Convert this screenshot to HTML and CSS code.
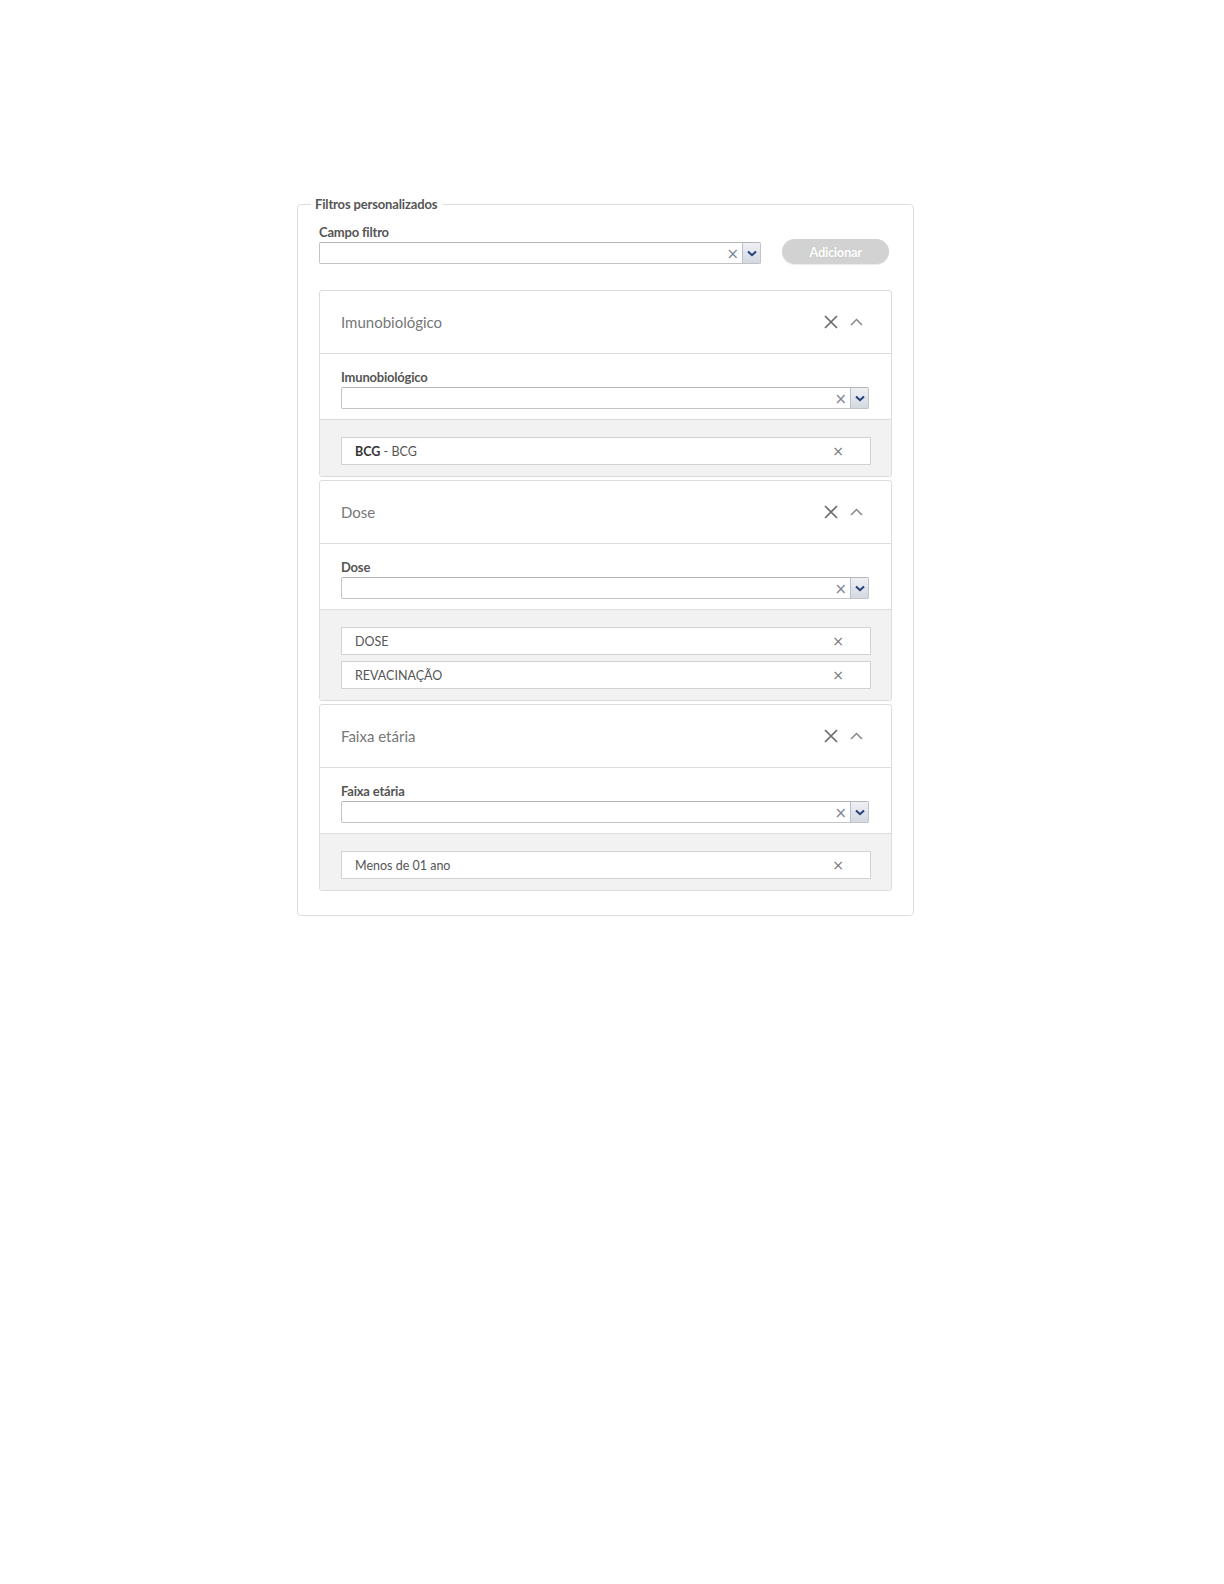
FILE: index.html
```html
<!DOCTYPE html>
<html lang="pt-BR">
<head>
    <meta charset="UTF-8" />
    <title>Filtros personalizados</title>
    <link rel="stylesheet" href="styles.css">
</head>
<body>
    <div class="page">
        <fieldset class="filters">
            <legend>Filtros personalizados</legend>

            <div class="add-row">
                <div class="field">
                    <label class="field-label">Campo filtro</label>
                    <div class="combo">
                        <span class="combo-input"></span>
                        <span class="combo-clear">&times;</span>
                        <span class="combo-btn">
                            <svg width="10" height="7" viewBox="0 0 10 7"><path d="M1 1.5 L5 5.2 L9 1.5" fill="none" stroke="#23407e" stroke-width="2"/></svg>
                        </span>
                    </div>
                </div>
                <button class="btn-add" disabled>Adicionar</button>
            </div>

            <!-- Imunobiológico -->
            <div class="panel">
                <div class="panel-head">
                    <span class="panel-title">Imunobiológico</span>
                    <span class="panel-tools">
                        <svg class="ic-close" width="14" height="14" viewBox="0 0 14 14"><path d="M1 1 L13 13 M13 1 L1 13" stroke="#6a6a6a" stroke-width="1.7"/></svg>
                        <svg class="ic-up" width="13" height="8" viewBox="0 0 13 8"><path d="M1 7 L6.5 1.5 L12 7" fill="none" stroke="#888" stroke-width="1.5"/></svg>
                    </span>
                </div>
                <div class="panel-body">
                    <label class="field-label">Imunobiológico</label>
                    <div class="combo">
                        <span class="combo-input"></span>
                        <span class="combo-clear">&times;</span>
                        <span class="combo-btn">
                            <svg width="10" height="7" viewBox="0 0 10 7"><path d="M1 1.5 L5 5.2 L9 1.5" fill="none" stroke="#23407e" stroke-width="2"/></svg>
                        </span>
                    </div>
                </div>
                <div class="panel-items">
                    <div class="item"><span><b>BCG</b> - BCG</span><span class="item-x">&times;</span></div>
                </div>
            </div>

            <!-- Dose -->
            <div class="panel">
                <div class="panel-head">
                    <span class="panel-title">Dose</span>
                    <span class="panel-tools">
                        <svg class="ic-close" width="14" height="14" viewBox="0 0 14 14"><path d="M1 1 L13 13 M13 1 L1 13" stroke="#6a6a6a" stroke-width="1.7"/></svg>
                        <svg class="ic-up" width="13" height="8" viewBox="0 0 13 8"><path d="M1 7 L6.5 1.5 L12 7" fill="none" stroke="#888" stroke-width="1.5"/></svg>
                    </span>
                </div>
                <div class="panel-body">
                    <label class="field-label">Dose</label>
                    <div class="combo">
                        <span class="combo-input"></span>
                        <span class="combo-clear">&times;</span>
                        <span class="combo-btn">
                            <svg width="10" height="7" viewBox="0 0 10 7"><path d="M1 1.5 L5 5.2 L9 1.5" fill="none" stroke="#23407e" stroke-width="2"/></svg>
                        </span>
                    </div>
                </div>
                <div class="panel-items">
                    <div class="item"><span>DOSE</span><span class="item-x">&times;</span></div>
                    <div class="item"><span>REVACINAÇÃO</span><span class="item-x">&times;</span></div>
                </div>
            </div>

            <!-- Faixa etária -->
            <div class="panel">
                <div class="panel-head">
                    <span class="panel-title">Faixa etária</span>
                    <span class="panel-tools">
                        <svg class="ic-close" width="14" height="14" viewBox="0 0 14 14"><path d="M1 1 L13 13 M13 1 L1 13" stroke="#6a6a6a" stroke-width="1.7"/></svg>
                        <svg class="ic-up" width="13" height="8" viewBox="0 0 13 8"><path d="M1 7 L6.5 1.5 L12 7" fill="none" stroke="#888" stroke-width="1.5"/></svg>
                    </span>
                </div>
                <div class="panel-body">
                    <label class="field-label">Faixa etária</label>
                    <div class="combo">
                        <span class="combo-input"></span>
                        <span class="combo-clear">&times;</span>
                        <span class="combo-btn">
                            <svg width="10" height="7" viewBox="0 0 10 7"><path d="M1 1.5 L5 5.2 L9 1.5" fill="none" stroke="#23407e" stroke-width="2"/></svg>
                        </span>
                    </div>
                </div>
                <div class="panel-items">
                    <div class="item"><span>Menos de 01 ano</span><span class="item-x">&times;</span></div>
                </div>
            </div>
        </fieldset>
    </div>
</body>
</html>
```

FILE: styles.css
```css
*,
*:before,
*:after{
    box-sizing: border-box;
}
body{
    margin: 0;
    background-color: #ffffff;
    font-family: Lato, "Open Sans", sans-serif;
    color: #555;
}
.page{
    padding: 196px 0 0 297px;
}

/* fieldset */
.filters{
    width: 617px;
    margin: 0;
    padding: 12px 21px 24px;
    border: 1px solid #dcdcdc;
    border-radius: 4px;
}
.filters legend{
    margin-left: -8px;
    padding: 0 6px 0 4px;
    font-size: 13px;
    line-height: 16px;
    font-weight: 700;
    letter-spacing: -0.15px;
    color: #555;
}

.field-label{
    display: block;
    font-size: 13px;
    line-height: 16px;
    font-weight: 700;
    letter-spacing: -0.2px;
    color: #555;
    margin-bottom: 2px;
}

/* combo box */
.combo{
    display: flex;
    align-items: center;
    height: 22px;
    border: 1px solid #c3c3c3;
    border-top-color: #b5b5b5;
    border-radius: 2px;
    background: #fff;
}
.combo-input{
    flex: 1;
}
.combo-clear{
    font-size: 15px;
    line-height: 1;
    color: #7f8898;
    margin: 3px 3px 0 0;
    font-family: "DejaVu Sans", sans-serif;
}
.combo-btn{
    width: 18px;
    height: 100%;
    display: flex;
    align-items: center;
    justify-content: center;
    border-left: 1px solid #b9c0cc;
    background: linear-gradient(#eef0f4, #d4d9e1);
}

/* top row */
.add-row{
    display: flex;
    align-items: flex-end;
    margin-bottom: 26px;
}
.add-row .field{
    width: 442px;
}
.btn-add{
    width: 107px;
    height: 25px;
    margin-left: 21px;
    border: none;
    border-radius: 13px;
    background-color: #d2d2d2;
    color: #ffffff;
    font-family: Lato, sans-serif;
    font-size: 13px;
    font-weight: 900;
    letter-spacing: -0.4px;
    text-shadow: 0 0 1px rgba(0,0,0,0.2);
    box-shadow: 0 1px 1px rgba(0,0,0,0.08);
}

/* panels */
.panel{
    border: 1px solid #dcdcdc;
    border-radius: 3px;
    margin-bottom: 3px;
    background: #fff;
}
.panel:last-child{
    margin-bottom: 0;
}
.panel-head{
    height: 63px;
    display: flex;
    align-items: center;
    justify-content: space-between;
    padding: 0 28px 0 21px;
    border-bottom: 1px solid #dcdcdc;
}
.panel-title{
    font-size: 15px;
    color: #777;
}
.panel-tools{
    display: flex;
    align-items: center;
    gap: 12px;
}
.panel-body{
    padding: 15px 22px 10px 21px;
}
.panel-items{
    background-color: #f2f2f2;
    border-top: 1px solid #dcdcdc;
    padding: 17px 20px 5px 21px;
    border-radius: 0 0 3px 3px;
}
.item{
    height: 28px;
    display: flex;
    align-items: center;
    justify-content: space-between;
    padding: 0 26px 0 13px;
    margin-bottom: 6px;
    background: #fff;
    border: 1px solid #d2d2d2;
    font-size: 12.5px;
    color: #555;
}
.item b{
    color: #333;
    font-weight: 700;
}
.item-x{
    font-family: "DejaVu Sans", sans-serif;
    font-size: 14px;
    color: #777;
}
```
